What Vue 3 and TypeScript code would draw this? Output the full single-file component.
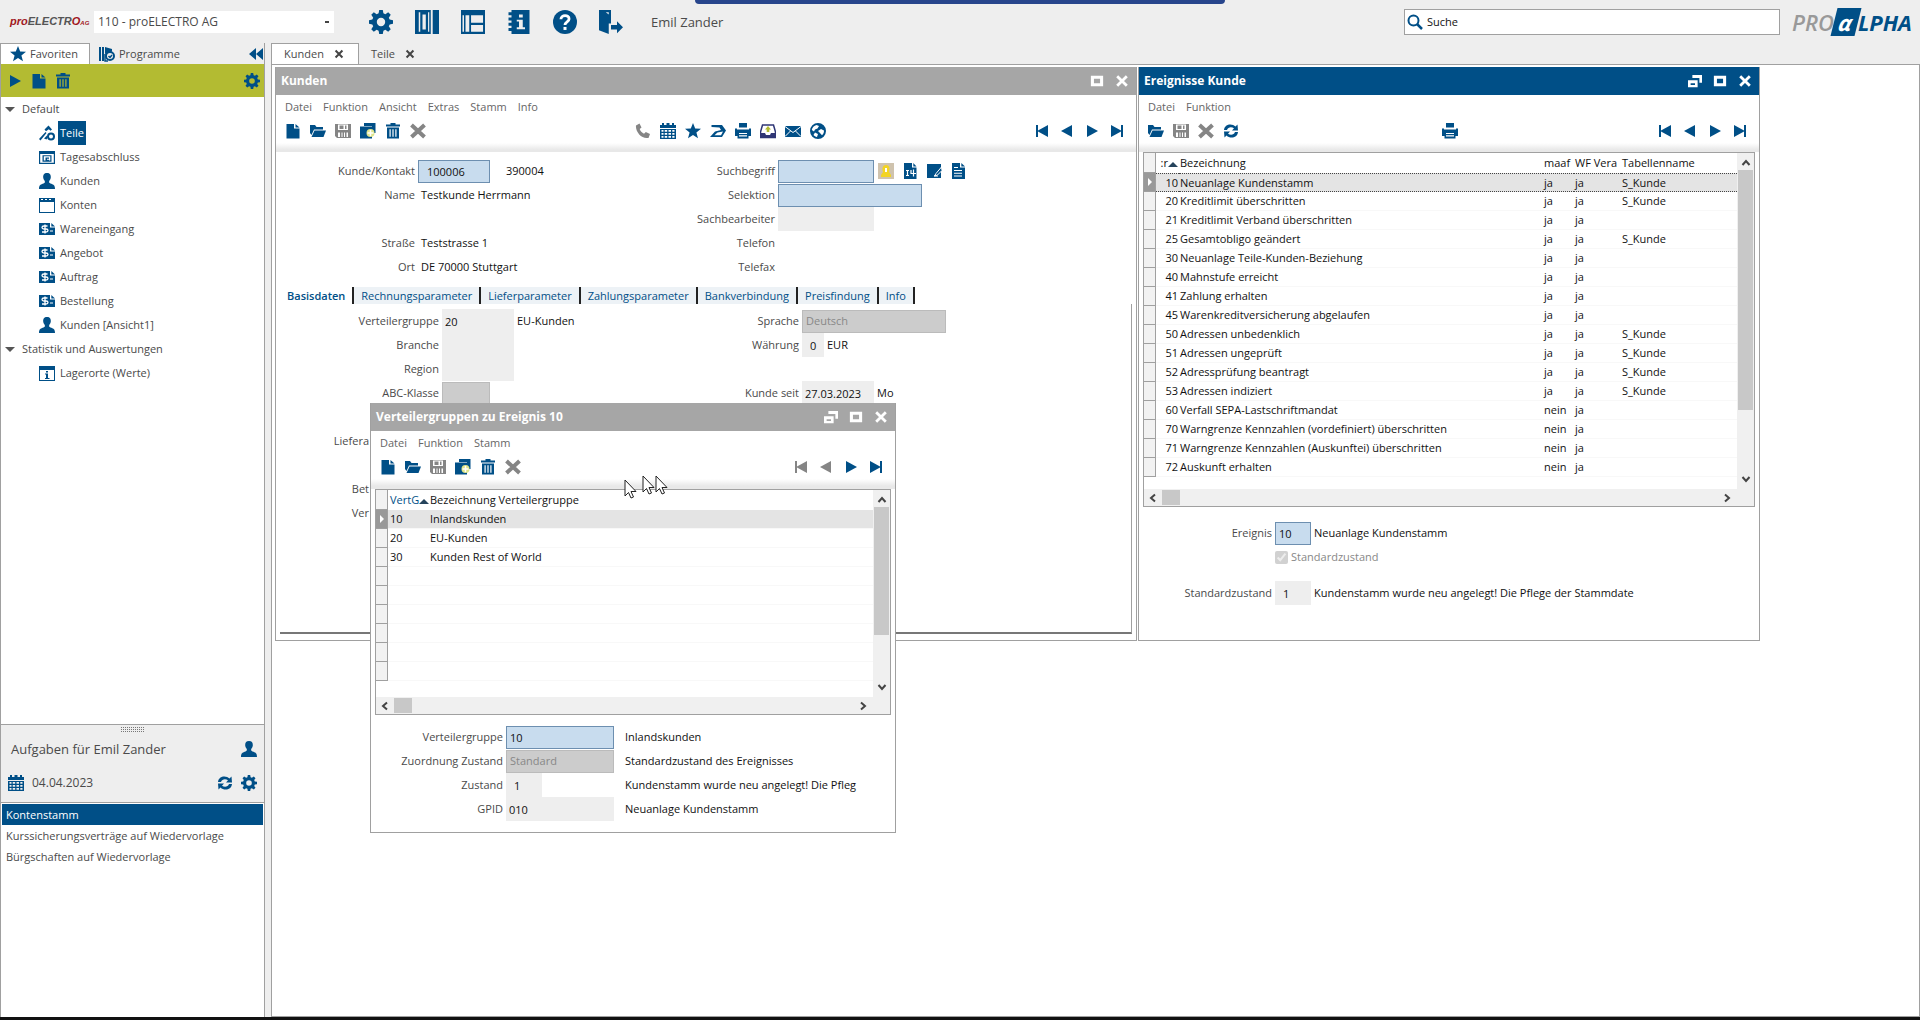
<script setup lang="ts">
import { ref } from 'vue'

const gear =
  '<path fill-rule="evenodd" d="M6.8 0h2.4l.4 2.2 1.3.6L12.800 1.500l1.700 1.700-1.300 1.900.6 1.300 2.200.4v2.400l-2.200.4-.6 1.300 1.300 1.900-1.700 1.700-1.900-1.300-1.300.6-.4 2.200H6.800l-.4-2.200-1.300-.6-1.900 1.300-1.700-1.700 1.300-1.900-.6-1.300L0 9.200V6.800l2.200-.4.6-1.300L1.500 3.200l1.700-1.700 1.900 1.300 1.300-.6zM8 5.200a2.800 2.800 0 1 0 0 5.600 2.800 2.800 0 0 0 0-5.600z"/>'

const icons: Record<string, string> = {
  gear,
  columns: '<path fill-rule="evenodd" d="M0 0h10.500v16H0zM2 1.500v13h7.500v-13zM3.500 1.500h5.200v13H3.500zM5 3v10h2.200V3zM11.800 0H16v16h-4.200z"/><path d="M1 0h1.500v16H1z"/>',
  layout: '<path fill-rule="evenodd" d="M0 0h16v16H0zM1 3.500v11h1V3.500zM3 3.500v11h2.500v-11zM6.700 3.500v5h8v-5zM6.700 10v4.500h8V10z"/>',
  notebook: '<path fill-rule="evenodd" d="M3 0h12v16H3v-2H1v-2h2v-1.500H1v-2h2V7H1V5h2V3.500H1v-2h2zM8 3v2h2.500V3zM6.500 6.500v1.200H8v3.800H6.500v1.300h5.500v-1.300h-1.500v-5z"/>',
  help: '<circle cx="8" cy="8" r="8"/><path d="M5.300 6.200C5.300 3 10.800 3 10.700 6c0 1.900-2.700 1.900-2.700 4" fill="none" stroke="#fff" stroke-width="1.900"/><rect x="7" y="11.300" width="2" height="2" fill="#fff"/>',
  exit: '<path d="M0 0h8v9H6.500V1.500h-2L6.500 3v13L0 13.500z"/><path d="M8 10h4V7.500l4 4-4 4V13H8z"/>',
  star: '<path d="M8 0l2.200 5.600 5.800.2-4.600 3.600L13 15.300 8 12l-5 3.300 1.600-5.900L0 5.800l5.800-.2z"/>',
  program: '<path d="M0 1h2v14H0zM3 1h2v14H3zM6 1l7 2v2.500L6 8z"/><circle cx="11" cy="10" r="4" fill="none" stroke="currentColor" stroke-width="2"/><path d="M9.500 10l1.500 1.500 2-2.500M6 8v7h3" fill="none" stroke="currentColor" stroke-width="1.500"/>',
  collapse: '<path d="M8 2v12L1 8zM15 2v12L8 8z"/>',
  play: '<path d="M3 2l11 6-11 6z"/>',
  prev: '<path d="M13 2v12L2 8z"/>',
  next: '<path d="M3 2v12l11-6z"/>',
  first: '<path d="M2 2h2v5.500L14 2v12L4 8.500V14H2z"/>',
  last: '<path d="M14 2h-2v5.500L2 2v12l10-5.500V14h2z"/>',
  file: '<path d="M1.500 1H9v4.500h5.500V15.500h-13zM10.500 1L14.500 4.500h-4z"/>',
  trash: '<path fill-rule="evenodd" d="M5.500 0h5v1.500h4.500v2H1v-2h4.500zM2 4.500h12V15.500H2zM4.500 6.200v7.500h1.200V6.200zM7.400 6.200v7.500h1.200V6.200zM10.300 6.200v7.500h1.200V6.200z"/>',
  folder: '<path d="M0 2h5l1.500 2H13v2.500H4L1.500 12 0 10z"/><path d="M4.500 7.500H16L13.500 14H1.500z"/>',
  save: '<path fill-rule="evenodd" d="M0 1h16v14H2l-2-2zM3 1.500V7h10V1.500zM4.500 2.500h4V6h-4zM10 2.500h1.500V6H10zM3 9.500v4.500h2V9.500zM6.500 9.500v4.500h1V9.500zM9 9.500v4.500h1V9.500zM11.500 9.500v4.500H13V9.500z"/>',
  copy: '<path d="M4 0h11.500v10H12V3H4z"/><path d="M0 3.500h12V15.500H0z"/><circle cx="10.500" cy="10" r="4" fill="#dfe58a"/><path d="M7.500 10h6M10.500 7v6" stroke="#fff" stroke-width="1.500"/>',
  cross: '<path d="M1.500 2l13 12M14.500 2l-13 12" stroke="currentColor" stroke-width="4"/>',
  phone: '<path d="M1 2.500L4.500.5l2 4-1.800 1.500c.6 2 2.200 3.800 4.300 4.700l1.800-1.600 4.200 2-1.500 3.800C7 16.500.2 9 1 2.500z"/>',
  calendar: '<path fill-rule="evenodd" d="M0 2h2V0h2v2h2.500V0h3v2H12V0h2v2h2v3H0zM0 6h16v10H0zM1.500 7v1.700h2V7zM4.700 7v1.700h2.500V7zM8.500 7v1.700H11V7zM12.300 7v1.700h2.200V7zM1.500 9.900v1.800h2V9.900zM4.700 9.900v1.800h2.500V9.900zM8.500 9.900v1.800H11V9.900zM12.300 9.900v1.800h2.200V9.900zM1.500 12.900v1.800h2v-1.800zM4.700 12.900v1.800h2.500v-1.800zM8.500 12.900v1.800H11v-1.800zM12.300 12.900v1.800h2.200v-1.800z"/>',
  send: '<path fill-rule="evenodd" d="M1.500 2H12l4 5.500-4 6.500H0l5-5.500 6-1.500-1.500-2.500-8-.5zM7.500 9.500L4.500 12.300H11l2-3.800z"/>',
  print: '<path fill-rule="evenodd" d="M4 0h8v4.500H4zM0 5.500h2v1h12v-1h2V13h-2.500v2.500h-11V13H0zM4 10h8v1H4zM4 12.300h8v1.200H4z"/>',
  inbox: '<path d="M2.500 2h11L15.500 9v5.500H.5V9z" fill="#fff" stroke="#2f3675" stroke-width="1.500"/><path d="M1 10h4l1 2h4l1-2h4v4.500H1z" fill="#2f3675"/><path d="M8 3l3 3.500H9.300V9H6.700V6.500H5z" fill="#b3bb32"/>',
  mail: '<path d="M0 3h16v11H0z"/><path d="M0 3.500l8 6 8-6M0 13.500l5.500-5.500M16 13.500L10.500 8" fill="none" stroke="#fff" stroke-width="1"/>',
  globe: '<path fill-rule="evenodd" d="M8 0a8 8 0 1 0 0 16A8 8 0 0 0 8 0zM6.500 2L9 3 7.500 5.500 5 6.500l-1 2L1.800 7C2.200 4.500 4 2.500 6.500 2zM11 6l3 1.500c0 2-.6 3.500-2 4.800L9.500 9.500 8 8zM5 9.500l3 1.500-1 3c-1.500-.3-2.500-.9-3.500-2z"/>',
  refresh: '<path d="M1 7C1.500 1 9 0 12.500 3.500L14.500 1.500 15 7.500H9L11 5.300C8.500 3.500 5 4 4 7zM15 9c-.5 6-8 7-11.500 3.500L1.500 14.500 1 8.500h6L5 10.700C7.500 12.500 11 12 12 9z"/>',
  user: '<path d="M8 0c3 0 4 2 3.800 4.500-.1 1.500-.9 2.700-1.600 3.500-.2 1.500 0 2 1.300 2.500 2.500.9 4.500 1.200 4.500 5.500H0c0-4.300 2-4.600 4.500-5.500C5.800 10 6 9.500 5.800 8c-.7-.8-1.500-2-1.600-3.500C4 2 5 0 8 0z"/>',
  tools: '<path d="M5.500 4.500L9.500.5l3.500 4-1.500 1.200-1.700-1.500-2.800 2zM0 14l6.500-7 1 1L1.500 15.500z"/><circle cx="12" cy="11.500" r="3" fill="none" stroke="currentColor" stroke-width="2"/><path d="M5 13.500l3-3 1 1.500-1.500 2.500z"/>',
  closing: '<path fill-rule="evenodd" d="M0 2h16v13H0zM1.200 5v8.800h13.600V5zM3.500 6.200h9v6.500h-9zM4.800 7.300v4.200h6.500V7.300zM6.500 8.500h3.500v1.200H8v1h2v.8H6.500z"/>',
  frame: '<path fill-rule="evenodd" d="M0 1h16v15H0zM1 5v10h14V5z"/><path d="M2 2.500h2M6 2.500h2M10 2.500h2" stroke="#fff"/>',
  info: '<path fill-rule="evenodd" d="M0 1h16v15H0zM1 5v10h14V5z"/><path d="M7 6h2v1.500H7zM6 8.500h3v4.500h1.500v1H6v-1h1V9.500H6z"/>',
  order: '<path d="M0 2h11v4.500h5V14H0z"/><path d="M12.300 2L16 5.500h-3.700z"/><path d="M8.500 5H5Q3 5 3 6.500T5 8h2q2 0 2 1.500T7 11H3M6 3.500v9" fill="none" stroke="#fff" stroke-width="1.300"/><path d="M11 10h3" stroke="#fff"/>',
  person: '<rect width="16" height="16" fill="#cfc3ae"/><path d="M8 2c4 0 4 4 3 7l2 3v2H3v-2l2-3C4 6 4 2 8 2z" fill="#f3d423"/><path d="M8 5v4" stroke="#fff" stroke-width="2"/>',
  docdate: '<path d="M2 0h8v4.500h4.500V16H2z"/><path d="M11.300 0l3.200 3.500h-3.200z"/><path d="M4 7.500h3M5.500 7.500v5M4 12.500h3M11.500 6.500v7M9 7v3.500h5" stroke="#fff" stroke-width="1.200" fill="none"/>',
  docedit: '<path d="M1 1h14v14H1z"/><path d="M15.500 4L10 10.500l-1.500 2.500 3-1L16 7.500zM8 13h4" stroke="#fff" stroke-width="1" fill="#004f87"/>',
  doctext: '<path d="M2 0h8v4.500h5V16H2z"/><path d="M11.300 0L15 3.500h-3.700z"/><path d="M4 4.500h4M4 7.500h8M4 10.300h8M4 13h8" stroke="#fff" stroke-width="1.100"/>',
  restore: '<path d="M5 1h11v9h-3V4.500H5z"/><path fill-rule="evenodd" d="M0 7h11v8H0zM3 10.500v2h5v-2z"/>',
  maximize: '<path fill-rule="evenodd" d="M1 2h14v12H1zM4.500 5.500v5h7v-5z"/>',
  close: '<path d="M2.500 2.500l11 11M13.500 2.500l-11 11" stroke="currentColor" stroke-width="3.200"/>',
}

const toolbarIcons = ['gear', 'columns', 'layout', 'notebook', 'help', 'exit']

const treeDefault = [
  { icon: 'tools', label: 'Teile', selected: true },
  { icon: 'closing', label: 'Tagesabschluss' },
  { icon: 'user', label: 'Kunden' },
  { icon: 'frame', label: 'Konten' },
  { icon: 'order', label: 'Wareneingang' },
  { icon: 'order', label: 'Angebot' },
  { icon: 'order', label: 'Auftrag' },
  { icon: 'order', label: 'Bestellung' },
  { icon: 'user', label: 'Kunden [Ansicht1]' },
]

const tasks = ['Kontenstamm', 'Kurssicherungsverträge auf Wiedervorlage', 'Bürgschaften auf Wiedervorlage']

const editIcons = ['file', 'folder', 'save', 'copy', 'trash', 'cross']
const sendIcons = ['phone', 'calendar', 'star', 'send', 'print', 'inbox', 'mail', 'globe']
const navIcons = ['first', 'prev', 'next', 'last']
const eventIcons = ['folder', 'save', 'cross', 'refresh']
const recordIcons = ['person', 'docdate', 'docedit', 'doctext']
const muted = new Set(['save', 'cross', 'phone'])

const pages = ['Basisdaten', 'Rechnungsparameter', 'Lieferparameter', 'Zahlungsparameter', 'Bankverbindung', 'Preisfindung', 'Info']

interface EventRow {
  id: number
  name: string
  active: string
  table: string
}

const k = 'S_Kunde'
const events: EventRow[] = [
  { id: 10, name: 'Neuanlage Kundenstamm', active: 'ja', table: k },
  { id: 20, name: 'Kreditlimit überschritten', active: 'ja', table: k },
  { id: 21, name: 'Kreditlimit Verband überschritten', active: 'ja', table: '' },
  { id: 25, name: 'Gesamtobligo geändert', active: 'ja', table: k },
  { id: 30, name: 'Neuanlage Teile-Kunden-Beziehung', active: 'ja', table: '' },
  { id: 40, name: 'Mahnstufe erreicht', active: 'ja', table: '' },
  { id: 41, name: 'Zahlung erhalten', active: 'ja', table: '' },
  { id: 45, name: 'Warenkreditversicherung abgelaufen', active: 'ja', table: '' },
  { id: 50, name: 'Adressen unbedenklich', active: 'ja', table: k },
  { id: 51, name: 'Adressen ungeprüft', active: 'ja', table: k },
  { id: 52, name: 'Adressprüfung beantragt', active: 'ja', table: k },
  { id: 53, name: 'Adressen indiziert', active: 'ja', table: k },
  { id: 60, name: 'Verfall SEPA-Lastschriftmandat', active: 'nein', table: '' },
  { id: 70, name: 'Warngrenze Kennzahlen (vordefiniert) überschritten', active: 'nein', table: '' },
  { id: 71, name: 'Warngrenze Kennzahlen (Auskunftei) überschritten', active: 'nein', table: '' },
  { id: 72, name: 'Auskunft erhalten', active: 'nein', table: '' },
]

const groups = [
  ['10', 'Inlandskunden'],
  ['20', 'EU-Kunden'],
  ['30', 'Kunden Rest of World'],
  ['', ''],
  ['', ''],
  ['', ''],
  ['', ''],
  ['', ''],
  ['', ''],
]

const search = ref('Suche')
const customerNo = ref('100006')
const searchTerm = ref('')
const selection = ref('')
const eventNo = ref('10')
const groupNo = ref('10')
</script>

<template>
  <div class="app">
    <header class="topbar">
      <div class="brand"><span class="brand-pro">pro</span>ELECTR<span class="brand-o">O</span><small>AG</small></div>
      <select class="company" aria-label="Firma"><option>110 - proELECTRO AG</option></select>
      <nav class="main-tools">
        <button v-for="i in toolbarIcons" :key="i" type="button" :aria-label="i"><svg viewBox="0 0 16 16" v-html="icons[i]" /></button>
      </nav>
      <span class="user-name">Emil Zander</span>
      <label class="search">
        <svg viewBox="0 0 16 16"><circle cx="6.500" cy="6.500" r="5" fill="none" stroke="currentColor" stroke-width="2" /><path d="M10 10l5 5" stroke="currentColor" stroke-width="2.500" /></svg>
        <input v-model="search" type="text" aria-label="Suche" />
      </label>
      <div class="logo"><span>PRO</span><b>α</b><em>LPHA</em></div>
      <div class="share-bar"></div>
    </header>

    <div class="body">
      <aside class="sidebar">
        <div class="side-tabs">
          <button type="button" class="side-tab active"><svg viewBox="0 0 16 16" v-html="icons.star" />Favoriten</button>
          <button type="button" class="side-tab"><svg viewBox="0 0 16 16" v-html="icons.program" />Programme</button>
          <button type="button" class="collapse" aria-label="Einklappen"><svg viewBox="0 0 16 16" v-html="icons.collapse" /></button>
        </div>
        <div class="side-tools">
          <button v-for="i in ['play', 'file', 'trash', 'gear']" :key="i" type="button" :aria-label="i"><svg viewBox="0 0 16 16" v-html="icons[i]" /></button>
        </div>
        <div class="tree">
          <div class="branch"><i class="arrow"></i>Default</div>
          <div v-for="t in treeDefault" :key="t.label" class="leaf" :class="{ selected: t.selected }">
            <svg viewBox="0 0 16 16" v-html="icons[t.icon]" /><span>{{ t.label }}</span>
          </div>
          <div class="branch"><i class="arrow"></i>Statistik und Auswertungen</div>
          <div class="leaf"><svg viewBox="0 0 16 16" v-html="icons.info" /><span>Lagerorte (Werte)</span></div>
        </div>
        <div class="tasks-head">
          <div class="grip"></div>
          <div class="tasks-line">
            <span class="tasks-title">Aufgaben für Emil Zander</span>
            <svg viewBox="0 0 16 16" v-html="icons.user" />
          </div>
          <div class="tasks-line">
            <svg viewBox="0 0 16 16" v-html="icons.calendar" />
            <span class="tasks-date">04.04.2023</span>
            <svg viewBox="0 0 16 16" v-html="icons.refresh" />
            <svg viewBox="0 0 16 16" v-html="icons.gear" />
          </div>
        </div>
        <ul class="tasks">
          <li v-for="(t, n) in tasks" :key="t" :class="{ selected: n === 0 }">{{ t }}</li>
        </ul>
      </aside>

      <main class="work">
        <div class="doc-tabs">
          <button type="button" class="doc-tab active">Kunden<svg viewBox="0 0 16 16" v-html="icons.close" /></button>
          <button type="button" class="doc-tab">Teile<svg viewBox="0 0 16 16" v-html="icons.close" /></button>
        </div>

        <div class="desktop">
          <section class="window customers">
            <h2 class="title">
              <span>Kunden</span>
              <button v-for="i in ['maximize', 'close']" :key="i" type="button" :aria-label="i"><svg viewBox="0 0 16 16" v-html="icons[i]" /></button>
            </h2>
            <nav class="menu"><a v-for="m in ['Datei', 'Funktion', 'Ansicht', 'Extras', 'Stamm', 'Info']" :key="m" href="#">{{ m }}</a></nav>
            <div class="tools">
              <div class="tool-group"><button v-for="i in editIcons" :key="i" type="button" :class="{ muted: muted.has(i) }" :aria-label="i"><svg viewBox="0 0 16 16" v-html="icons[i]" /></button></div>
              <div class="tool-group middle"><button v-for="i in sendIcons" :key="i" type="button" :class="{ muted: muted.has(i) }" :aria-label="i"><svg viewBox="0 0 16 16" v-html="icons[i]" /></button></div>
              <div class="tool-group nav"><button v-for="i in navIcons" :key="i" type="button" :aria-label="i"><svg viewBox="0 0 16 16" v-html="icons[i]" /></button></div>
            </div>
            <div class="customer-head">
              <div class="fields">
                <label for="kunde">Kunde/Kontakt</label>
                <div class="value"><input id="kunde" v-model="customerNo" class="edit indent w72" type="text" /><span class="contact">390004</span></div>
                <span class="label">Name</span><span class="value text">Testkunde Herrmann</span>
                <span class="label spaced">Straße</span><span class="value text spaced">Teststrasse 1</span>
                <span class="label">Ort</span><span class="value text">DE 70000 Stuttgart</span>
              </div>
              <div class="fields">
                <label for="such">Suchbegriff</label>
                <div class="value">
                  <input id="such" v-model="searchTerm" class="edit w96" type="text" />
                  <button v-for="i in recordIcons" :key="i" class="record" type="button" :aria-label="i"><svg viewBox="0 0 16 16" v-html="icons[i]" /></button>
                </div>
                <label for="sel">Selektion</label>
                <div class="value"><input id="sel" v-model="selection" class="edit w144" type="text" /></div>
                <label for="sach">Sachbearbeiter</label>
                <div class="value"><input id="sach" class="plain w96" type="text" readonly /></div>
                <span class="label">Telefon</span><span></span>
                <span class="label">Telefax</span><span></span>
              </div>
            </div>
            <div class="pages">
              <button v-for="(p, n) in pages" :key="p" type="button" :class="{ active: n === 0 }">{{ p }}</button>
            </div>
            <div class="page">
              <div class="fields">
                <label for="vg">Verteilergruppe</label>
                <div class="value"><input id="vg" class="plain w72" type="text" value="20" readonly /><span class="text">EU-Kunden</span></div>
                <label for="br">Branche</label><div class="value"><input id="br" class="plain w72" type="text" readonly /></div>
                <label for="re">Region</label><div class="value"><input id="re" class="plain w72" type="text" readonly /></div>
                <label for="abc">ABC-Klasse</label><div class="value"><select id="abc" class="off w48" disabled><option></option></select></div>
                <span class="label clipped spaced">Liefera</span><span class="spaced"></span>
                <span class="label clipped spaced">Bet</span><span class="spaced"></span>
                <span class="label clipped">Ver</span><span></span>
              </div>
              <div class="fields">
                <label for="spr">Sprache</label>
                <div class="value"><select id="spr" class="off w144" disabled><option>Deutsch</option></select></div>
                <label for="wae">Währung</label>
                <div class="value"><input id="wae" class="plain currency" type="text" value="0" readonly /><span class="text">EUR</span></div>
                <label for="seit" class="spaced">Kunde seit</label>
                <div class="value spaced"><input id="seit" class="plain w72" type="text" value="27.03.2023" readonly /><span class="text">Mo</span></div>
              </div>
            </div>
          </section>

          <section class="window events focused">
            <h2 class="title">
              <span>Ereignisse Kunde</span>
              <button v-for="i in ['restore', 'maximize', 'close']" :key="i" type="button" :aria-label="i"><svg viewBox="0 0 16 16" v-html="icons[i]" /></button>
            </h2>
            <nav class="menu"><a v-for="m in ['Datei', 'Funktion']" :key="m" href="#">{{ m }}</a></nav>
            <div class="tools">
              <div class="tool-group"><button v-for="i in eventIcons" :key="i" type="button" :class="{ muted: muted.has(i) }" :aria-label="i"><svg viewBox="0 0 16 16" v-html="icons[i]" /></button></div>
              <div class="tool-group middle"><button type="button" aria-label="print"><svg viewBox="0 0 16 16" v-html="icons.print" /></button></div>
              <div class="tool-group nav"><button v-for="i in navIcons" :key="i" type="button" :aria-label="i"><svg viewBox="0 0 16 16" v-html="icons[i]" /></button></div>
            </div>
            <div class="browser">
              <table>
                <colgroup><col class="c-mark" /><col class="c-no" /><col /><col class="c-yes" /><col class="c-wf" /><col class="c-table" /></colgroup>
                <thead>
                  <tr><th class="mark"></th><th class="num">:r<i class="sort"></i></th><th>Bezeichnung</th><th>maaf</th><th>WF Vera</th><th>Tabellenname</th></tr>
                </thead>
                <tbody>
                  <tr v-for="(e, n) in events" :key="e.id" :class="{ current: n === 0 }">
                    <td class="mark"></td><td class="num">{{ e.id }}</td><td>{{ e.name }}</td><td>{{ e.active }}</td><td>ja</td><td>{{ e.table }}</td>
                  </tr>
                </tbody>
              </table>
              <div class="vbar"><svg viewBox="0 0 10 10"><path d="M1.500 7L5 3l3.500 4" /></svg><i></i><svg viewBox="0 0 10 10"><path d="M1.500 3L5 7l3.500-4" /></svg></div>
              <div class="hbar"><svg viewBox="0 0 10 10"><path d="M7 1.500L3 5l4 3.500" /></svg><i></i><svg viewBox="0 0 10 10"><path d="M3 1.500L7 5 3 8.500" /></svg></div>
            </div>
            <div class="fields event-fields">
              <label for="erg">Ereignis</label>
              <div class="value"><input id="erg" v-model="eventNo" class="edit w36" type="text" /><span class="text">Neuanlage Kundenstamm</span></div>
              <span></span>
              <label class="check"><input type="checkbox" checked disabled />Standardzustand</label>
              <label for="std">Standardzustand</label>
              <div class="value"><input id="std" class="plain indent w36" type="text" value="1" readonly /><span class="text">Kundenstamm wurde neu angelegt! Die Pflege der Stammdate</span></div>
            </div>
          </section>

          <section class="window groups">
            <h2 class="title">
              <span>Verteilergruppen zu Ereignis 10</span>
              <button v-for="i in ['restore', 'maximize', 'close']" :key="i" type="button" :aria-label="i"><svg viewBox="0 0 16 16" v-html="icons[i]" /></button>
            </h2>
            <nav class="menu"><a v-for="m in ['Datei', 'Funktion', 'Stamm']" :key="m" href="#">{{ m }}</a></nav>
            <div class="tools">
              <div class="tool-group"><button v-for="i in editIcons" :key="i" type="button" :class="{ muted: muted.has(i) }" :aria-label="i"><svg viewBox="0 0 16 16" v-html="icons[i]" /></button></div>
              <div class="tool-group nav"><button v-for="(i, n) in navIcons" :key="i" type="button" :class="{ muted: n < 2 }" :aria-label="i"><svg viewBox="0 0 16 16" v-html="icons[i]" /></button></div>
            </div>
            <div class="browser">
              <table>
                <colgroup><col class="c-mark" /><col class="c-group" /><col /></colgroup>
                <thead>
                  <tr><th class="mark"></th><th class="key">VertG<i class="sort"></i></th><th>Bezeichnung Verteilergruppe</th></tr>
                </thead>
                <tbody>
                  <tr v-for="(g, n) in groups" :key="n" :class="{ current: n === 0 }">
                    <td class="mark"></td><td class="code">{{ g[0] }}</td><td>{{ g[1] }}</td>
                  </tr>
                </tbody>
              </table>
              <div class="vbar"><svg viewBox="0 0 10 10"><path d="M1.500 7L5 3l3.500 4" /></svg><i></i><svg viewBox="0 0 10 10"><path d="M1.500 3L5 7l3.500-4" /></svg></div>
              <div class="hbar"><svg viewBox="0 0 10 10"><path d="M7 1.500L3 5l4 3.500" /></svg><i></i><svg viewBox="0 0 10 10"><path d="M3 1.500L7 5 3 8.500" /></svg></div>
            </div>
            <div class="fields group-fields">
              <label for="gr">Verteilergruppe</label>
              <div class="value"><input id="gr" v-model="groupNo" class="edit w108" type="text" /></div><span class="text">Inlandskunden</span>
              <label for="zo">Zuordnung Zustand</label>
              <div class="value"><select id="zo" class="off w108" disabled><option>Standard</option></select></div><span class="text">Standardzustand des Ereignisses</span>
              <label for="zu">Zustand</label>
              <div class="value"><input id="zu" class="plain indent w36" type="text" value="1" readonly /></div><span class="text">Kundenstamm wurde neu angelegt! Die Pfleg</span>
              <label for="gp">GPID</label>
              <div class="value"><input id="gp" class="plain w108" type="text" value="010" readonly /></div><span class="text">Neuanlage Kundenstamm</span>
            </div>
            <svg class="pointers" viewBox="0 0 46 26">
              <g fill="#fff" stroke="#222" stroke-width="1">
                <path d="M1 5v16l3.500-3.500 2.500 5.500 2.500-1-2.500-5.500h5z" />
                <path d="M19 1v16l3.500-3.500 2.500 5.500 2.500-1-2.500-5.500h5z" />
                <path d="M32 1v16l3.500-3.500 2.500 5.500 2.500-1-2.500-5.500h5z" />
              </g>
            </svg>
          </section>
        </div>
      </main>
    </div>
  </div>
</template>

<style>
body {
  margin: 0;
}
</style>

<style scoped>
.app {
  --blue: #004f87;
  --line: #a0a0a0;
  display: flex;
  flex-direction: column;
  min-height: 100vh;
  box-sizing: border-box;
  border-bottom: 3px solid #111;
  background: #eee;
  color: #4a4a4a;
  font: 11px/16px 'Open Sans', 'Noto Sans', sans-serif;
}
button,
input,
select {
  font: inherit;
  color: inherit;
  margin: 0;
  padding: 0;
  border: 0;
  background: none;
  box-sizing: border-box;
}
svg {
  display: block;
  flex: none;
  width: 16px;
  height: 16px;
  fill: currentColor;
  color: var(--blue);
}

/* top bar */
.topbar {
  position: relative;
  display: flex;
  align-items: center;
  height: 43px;
  padding: 0 4px 0 10px;
}
.brand {
  width: 84px;
  font: italic bold 11px/16px 'Liberation Sans', sans-serif;
  color: #555;
  white-space: nowrap;
}
.brand-pro,
.brand-o {
  color: #a11722;
}
.brand small {
  font-size: 6px;
  color: #a11722;
}
.company {
  width: 240px;
  height: 22px;
  padding-left: 4px;
  background: #fff;
  font-size: 12px;
  appearance: none;
  background-image: linear-gradient(#444, #444);
  background-size: 4px 2px;
  background-position: 231px 10px;
  background-repeat: no-repeat;
}
.main-tools {
  display: flex;
  gap: 22px;
  margin-left: 35px;
}
.main-tools svg {
  width: 24px;
  height: 24px;
}
.user-name {
  margin-left: 28px;
  font-size: 13px;
}
.search {
  display: flex;
  align-items: center;
  gap: 4px;
  width: 376px;
  height: 26px;
  margin-left: auto;
  padding: 0 2px;
  box-sizing: border-box;
  border: 1px solid var(--line);
  background: #fff;
  color: #111;
}
.search input {
  flex: 1;
}
.logo {
  display: flex;
  align-items: center;
  width: 124px;
  margin-left: 12px;
  font: italic 22px/28px 'Open Sans', sans-serif;
  color: #999;
}
.logo span {
  font-weight: 600;
}
.logo b {
  width: 24px;
  background: var(--blue);
  color: #fff;
  text-align: center;
  transform: skewX(-14deg);
}
.logo em {
  color: var(--blue);
  font-weight: bold;
}
.share-bar {
  position: absolute;
  top: 0;
  left: 695px;
  width: 530px;
  height: 4px;
  border-radius: 0 0 4px 4px;
  background: #27458c;
}

.body {
  flex: 1;
  display: flex;
}

/* sidebar */
.sidebar {
  display: flex;
  flex-direction: column;
  width: 265px;
  box-sizing: border-box;
  border-left: 1px solid var(--line);
  border-right: 1px solid var(--line);
}
.side-tabs {
  display: flex;
  height: 21px;
}
.side-tab {
  display: flex;
  align-items: center;
  gap: 4px;
  padding-left: 9px;
  color: #4a4a4a;
}
.side-tab.active {
  width: 89px;
  border-top: 1px solid var(--line);
  border-right: 1px solid var(--line);
  background: #fff;
}
.collapse {
  margin-left: auto;
}
.side-tools {
  display: flex;
  align-items: center;
  gap: 8px;
  height: 33px;
  padding: 0 4px 0 6px;
  background: #b3bb32;
}
.side-tools button:last-child {
  margin-left: auto;
}
.tree {
  flex: 1;
  background: #fff;
  border-bottom: 1px solid var(--line);
}
.branch,
.leaf {
  display: flex;
  align-items: center;
  height: 24px;
}
.arrow {
  width: 0;
  margin: 0 7px 0 4px;
  border: 5px solid transparent;
  border-top-color: #555;
  border-bottom: 0;
}
.leaf {
  gap: 3px;
  padding-left: 38px;
}
.leaf span {
  padding: 0 2px;
  line-height: 24px;
}
.leaf.selected span {
  background: var(--blue);
  color: #fff;
}
.tasks-head {
  height: 77px;
  border-bottom: 1px solid var(--line);
}
.grip {
  width: 24px;
  height: 6px;
  margin: 1px auto 0;
  background:
    repeating-linear-gradient(#eee 0 1px, transparent 1px 2px),
    repeating-linear-gradient(90deg, #777 0 1px, #eee 1px 2px);
}
.tasks-line {
  display: flex;
  align-items: center;
  gap: 8px;
  height: 34px;
  padding: 0 7px;
}
.tasks-title {
  flex: 1;
  padding-left: 3px;
  font-size: 13px;
}
.tasks-date {
  flex: 1;
  font-size: 12px;
}
.tasks {
  height: 212px;
  margin: 0;
  padding: 1px;
  list-style: none;
  background: #fff;
}
.tasks li {
  padding: 0 4px;
  line-height: 21px;
}
.tasks .selected {
  background: var(--blue);
  color: #fff;
}

/* work area */
.work {
  flex: 1;
  display: flex;
  flex-direction: column;
  margin-left: 6px;
}
.doc-tabs {
  display: flex;
  height: 21px;
}
.doc-tab {
  display: flex;
  align-items: center;
  gap: 10px;
  padding: 0 14px 0 12px;
  color: #4a4a4a;
}
.doc-tab svg {
  width: 10px;
  height: 10px;
  color: #444;
}
.doc-tab.active {
  border: 1px solid var(--line);
  border-bottom: 0;
  background: #fff;
}
.desktop {
  position: relative;
  flex: 1;
  border: 1px solid var(--line);
  background: #fff;
}

/* windows placed freely on the desktop */
.window {
  position: absolute;
  display: flex;
  flex-direction: column;
  box-sizing: border-box;
  border: 1px solid var(--line);
  border-top: 0;
  background: #fff;
  --title: #a6a6a6;
}
.focused {
  --title: var(--blue);
}
.customers {
  left: 3px;
  top: 2px;
  width: 862px;
  height: 574px;
}
.events {
  left: 866px;
  top: 2px;
  width: 622px;
  height: 574px;
}
.groups {
  left: 98px;
  top: 338px;
  width: 526px;
  height: 430px;
}
.title {
  display: flex;
  align-items: center;
  gap: 9px;
  height: 28px;
  margin: 0;
  padding: 0 6px 0 5px;
  background: var(--title);
  color: #fff;
  font-size: 12px;
}
.title span {
  flex: 1;
}
.title svg {
  width: 16px;
  height: 14px;
  color: #fff;
}
.menu {
  display: flex;
  gap: 11px;
  padding: 4px 9px;
}
.menu a {
  color: #666;
  text-decoration: none;
}
.tools {
  display: flex;
  align-items: flex-start;
  height: 33px;
  padding: 0 7px 0 4px;
  background: linear-gradient(#fff 24px, #e8e8e8 31px, #e8e8e8);
}
.groups .tools {
  height: 34px;
}
.tool-group {
  display: flex;
}
.tool-group button {
  display: grid;
  place-items: center;
  width: 25px;
  height: 24px;
}
.muted svg {
  color: #858585;
}
.middle {
  margin-left: 200px;
}
.events .middle {
  margin-left: 194px;
}
.nav {
  margin-left: auto;
}

/* forms */
.fields {
  display: grid;
  grid-auto-rows: minmax(24px, auto);
  align-content: start;
  column-gap: 3px;
}
.fields > label,
.label {
  text-align: right;
  line-height: 24px;
  white-space: nowrap;
}
.value {
  display: flex;
  align-items: center;
  height: 24px;
}
.text,
.contact {
  padding-left: 3px;
  color: #111;
  line-height: 24px;
  white-space: nowrap;
}
.contact {
  padding-left: 16px;
}
.spaced {
  margin-top: 24px;
}
.clipped {
  padding-right: 70px;
}
.edit,
.plain,
.off {
  height: 23px;
  padding: 0 3px;
  color: #111;
}
.edit {
  border: 1px solid #6d8fb0;
  background: #c8dcee;
}
.plain {
  height: 24px;
  background: #eee;
}
.off {
  border: 1px solid #bbb;
  background: #ccc;
  color: #888;
  opacity: 1;
  appearance: none;
}
.indent {
  padding-left: 8px;
}
.w36 { width: 36px; }
.w48 { width: 48px; }
.w72 { width: 72px; }
.w96 { width: 96px; }
.w108 { width: 108px; }
.w144 { width: 144px; }
.currency {
  width: 22px;
  padding-left: 8px;
}
.record {
  margin-left: 8px;
}
.record:nth-of-type(1) {
  margin-left: 4px;
}
.customer-head {
  display: flex;
  margin: 0 4px;
  padding-top: 7px;
}
.customer-head .fields {
  grid-template-columns: 135px 222px;
}
.customer-head .fields + .fields {
  grid-template-columns: 135px auto;
}
.pages {
  display: flex;
  margin: 8px 4px 0;
}
.pages button {
  padding: 0 7px;
  border-right: 2px solid #222;
  line-height: 17px;
  background: #edf2f6;
  color: var(--blue);
}
.pages .active {
  background: #fff;
  font-weight: 600;
}
.page {
  flex: 1;
  display: flex;
  margin: 0 4px 6px;
  padding-top: 5px;
  border-right: 1px solid var(--line);
  border-bottom: 2px solid #777;
}
.page .fields {
  grid-template-columns: 159px 222px;
}
.page .fields + .fields {
  grid-template-columns: 135px auto;
}

/* record browsers */
.browser {
  display: grid;
  grid-template-columns: 1fr 17px;
  grid-template-rows: 1fr 17px;
  margin: 0 4px;
  border: 1px solid var(--line);
}
.events .browser {
  height: 353px;
}
.groups .browser {
  height: 224px;
}
table {
  width: 100%;
  align-self: start;
  border-collapse: separate;
  border-spacing: 0;
  table-layout: fixed;
  color: #111;
}
th,
td {
  height: 19px;
  padding: 0 1px;
  line-height: 18px;
  text-align: left;
  font-weight: normal;
  white-space: nowrap;
  box-sizing: border-box;
}
th {
  height: 20px;
}
td {
  border-bottom: 1px solid #f8f8f8;
}
.num {
  text-align: right;
}
.mark {
  border-right: 1px solid var(--line);
  border-bottom: 1px solid var(--line);
  background: #f2f2f2;
}
.current td {
  background: #e4e4e4;
}
.current .mark {
  background: #999;
}
.current .mark::after {
  content: '';
  display: block;
  width: 0;
  margin-left: 3px;
  border: 4px solid transparent;
  border-left-color: #fff;
  border-right: 0;
}
.events .current td:not(.mark) {
  border-top: 1px dotted #444;
  border-bottom: 1px dotted #444;
  line-height: 16px;
}
.key {
  padding-left: 2px;
  color: var(--blue);
}
.code {
  padding-left: 2px;
}
.sort {
  display: inline-block;
  border: 5px solid transparent;
  border-bottom-color: #25435c;
  border-top: 0;
}
.c-mark { width: 12px; }
.c-no { width: 23px; }
.c-yes { width: 31px; }
.c-wf { width: 47px; }
.c-table { width: 116px; }
.c-group { width: 41px; }
.vbar,
.hbar {
  display: flex;
  align-items: center;
  justify-content: space-between;
  background: #f0f0f0;
}
.vbar {
  flex-direction: column;
  padding: 5px 0;
}
.hbar {
  grid-column: 1 / 3;
  padding: 0 22px 0 4px;
}
.vbar i {
  flex: none;
  width: 15px;
  height: 240px;
  margin: 2px 0 auto;
  background: #c8c8c8;
}
.groups .vbar i {
  height: 128px;
}
.hbar i {
  width: 18px;
  height: 15px;
  margin: 0 auto 0 4px;
  background: #c8c8c8;
}
.vbar svg,
.hbar svg {
  width: 10px;
  height: 10px;
  fill: none;
  stroke: #444;
  stroke-width: 2px;
}
.event-fields {
  padding-top: 14px;
  grid-template-columns: 133px 1fr;
}
.event-fields > .check {
  display: flex;
  align-items: center;
  gap: 3px;
  color: #888;
  margin-bottom: 12px;
}
.check input {
  width: 13px;
  height: 13px;
}
.group-fields {
  padding-top: 10px;
  grid-template-columns: 132px 113px 1fr;
}
.pointers {
  position: absolute;
  left: 253px;
  top: 72px;
  width: 46px;
  height: 26px;
}
</style>
